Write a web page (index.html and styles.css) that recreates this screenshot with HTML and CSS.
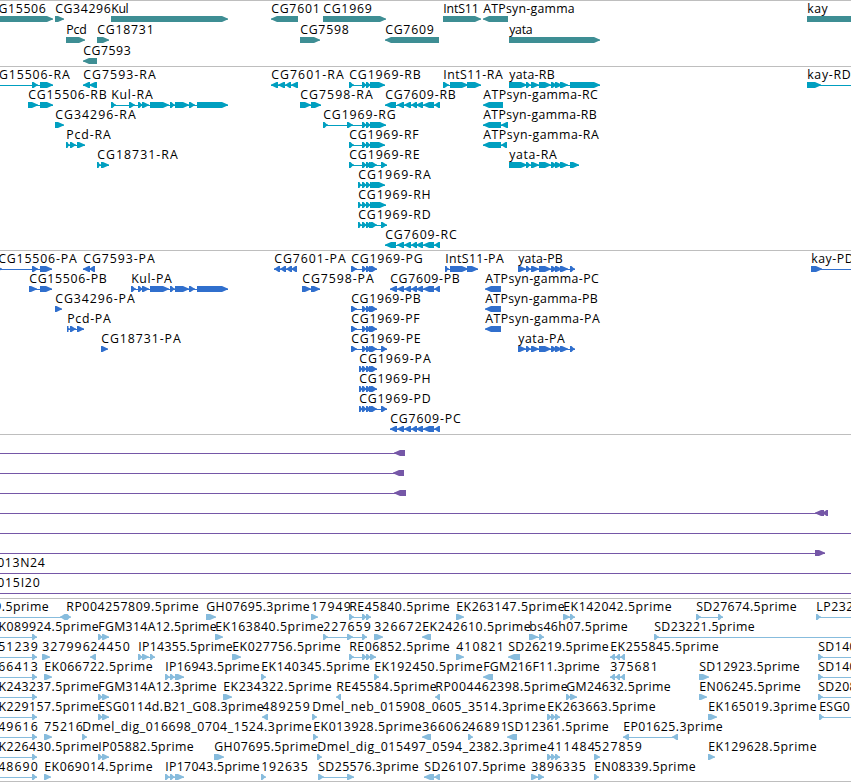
FILE: index.html
```html
<!DOCTYPE html>
<html lang="en">
<head>
<meta charset="utf-8">
<title>Genome tracks</title>
<link rel="stylesheet" href="styles.css">
</head>
<body>
<main class="browser">
<svg class="track genes" data-track="genes"></svg>
<svg class="track transcripts" data-track="transcripts"></svg>
<svg class="track proteins" data-track="proteins"></svg>
<svg class="track clones" data-track="clones"></svg>
<svg class="track ests" data-track="ests"></svg>
</main>
<script src="tracks.js"></script>
</body>
</html>
```
FILE: styles.css
```css
body {
  margin: 0;
  background: #fff;
}
.browser {
  display: flex;
  flex-direction: column;
  width: 851px;
  height: 781px;
  border-bottom: 1px solid #bebebe;
  overflow: hidden;
}
.track {
  display: block;
  flex: none;
  box-sizing: border-box;
  width: 100%;
  height: 184px;
  border-top: 1px solid #bebebe;
}
.track text {
  font: 12.3px "Open Sans", "Noto Sans", sans-serif;
  fill: #000;
}
.genes { height: 66px; color: #3e8e94; }
.transcripts { color: #009fc0; }
.proteins { color: #306fcd; }
.clones { height: 164px; color: #7557a7; }
.ests { height: 183px; color: #87bcdd; }
.glyph, .connector { fill: currentColor; }
.connector { shape-rendering: crispEdges; }
```
FILE: tracks.js
```js
// One feature per line: row | label | label start | label end | strand | segments
const tracks = {
genes: `
0|CG15506|-10|46|+|-20,53
0|CG34296|55|111|+|55,64
0|Kul|111|129|+|111,228
0|CG7601|271|320|-|271,298
0|CG1969|323|372|+|323,386
0|IntS11|443|479|+|443,481
0|ATPsyn-gamma|483|575|-|483,508
0|kay|807|828|+|807,900
1|Pcd|66|87|+|66,85
1|CG18731|97|154|+|97,109
1|CG7598|300|349|+|300,320
1|CG7609|385|434|-|385,439
1|yata|509|533|+|509,600
2|CG7593|83|131|-|83,97`,
transcripts: `
0|CG15506-RA|-10|70|+|-20,-10 32,38 40,53
0|CG7593-RA|83|156|-|83,90 89,97
0|CG7601-RA|271|344|-|271,278 278,285 285,291 291,298
0|CG1969-RB|349|421|+|349,354 362,367 366,371 370,375 371,385
0|IntS11-RA|443|503|+|443,449 450,468 467,481
0|yata-RB|509|555|+|509,527 526,531 531,539 539,551 551,557 555,562 560,568 570,600
0|kay-RD|807|851|+|807,821 890,900
1|CG15506-RB|28|107|+|28,38 40,53
1|Kul-RA|111|153|+|111,116 129,135 138,143 142,149 150,169 170,175 175,189 189,195 197,228
1|CG7598-RA|300|373|+|300,311 311,321
1|CG7609-RB|385|456|-|385,396 397,404 404,411 411,417 416,423 423,434 434,440
1|ATPsyn-gamma-RC|483|598|-|483,503
2|CG34296-RA|55|136|+|55,64
2|CG1969-RG|323|396|+|323,328 347,353 362,367 366,371 370,375 371,386
2|ATPsyn-gamma-RB|483|597|-|483,501 501,508
3|Pcd-RA|66|111|+|66,70 70,76 77,85
3|CG1969-RF|349|419|+|349,354 362,367 366,371 370,375 371,385
3|ATPsyn-gamma-RA|483|599|-|483,501 501,507
4|CG18731-RA|97|178|+|97,101 101,109
4|CG1969-RE|349|420|+|349,354 362,367 366,371 369,374 371,377 381,387
4|yata-RA|509|557|+|509,527 526,531 531,539 539,551 551,557 555,562 560,568 570,579
5|CG1969-RA|358|431|+|358,362 362,367 366,371 370,375 372,385
6|CG1969-RH|358|431|+|358,362 362,367 366,371 370,375 372,386
7|CG1969-RD|358|431|+|358,362 362,367 366,371 369,374 371,377 381,387
8|CG7609-RC|385|457|-|385,396 397,404 404,411 411,417 416,423 423,434 434,440`,
proteins: `
0|CG15506-PA|-2|77|+|-3,2 32,38 40,52
0|CG7593-PA|83|155|-|83,90 89,95
0|CG7601-PA|274|346|-|274,280 280,286 286,292 291,297
0|CG1969-PG|351|423|+|351,357 362,367 366,371 369,374 371,377
0|IntS11-PA|445|504|+|445,449 450,468 467,478
0|yata-PB|518|563|+|518,526 526,531 531,539 539,551 551,557 555,562 560,568 570,575
0|kay-PD|811|854|+|811,822 890,900
1|CG15506-PB|29|107|+|29,37 40,52
1|Kul-PA|131|172|+|131,136 138,143 142,149 150,169 170,175 175,189 189,195 197,228
1|CG7598-PA|302|374|+|302,311 311,320
1|CG7609-PB|390|460|-|390,397 397,404 404,411 411,417 416,423 423,434 434,440
1|ATPsyn-gamma-PC|485|599|-|485,501
2|CG34296-PA|55|135|+|55,62
2|CG1969-PB|351|421|+|351,357 362,367 366,371 369,374 371,377
2|ATPsyn-gamma-PB|485|598|-|485,501
3|Pcd-PA|67|111|+|67,70 70,76 77,84
3|CG1969-PF|351|420|+|351,357 362,367 366,371 369,374 371,377
3|ATPsyn-gamma-PA|485|600|-|485,501
4|CG18731-PA|101|181|+|101,108
4|CG1969-PE|351|421|+|351,357 362,367 366,371 369,374 371,377 381,387
4|yata-PA|518|565|+|518,526 526,531 531,539 539,551 551,557 555,562 560,568 570,575
5|CG1969-PA|359|431|+|359,363 362,367 366,371 369,374 371,377
6|CG1969-PH|359|431|+|359,363 362,367 366,371 369,374 371,377
7|CG1969-PD|359|431|+|359,363 362,367 366,371 369,374 371,377 381,387
8|CG7609-PC|390|461|-|390,397 397,404 404,411 411,417 416,423 423,434 434,440`,
clones: `
0||||-|-20,-10 394,405
1||||-|-20,-10 393,404
2||||-|-20,-10 394,406
3||||-|-20,-10 815,824 822,828
4||||+|-20,-10 890,900
5||||+|-20,-10 815,825
6|013N24|-3|45|+|-20,-10 890,900
7|015I20|-3|40|+|-20,-10 890,900`,
ests: `
0|9.5prime|-6|49|-|-20,-10 60,66
0|RP004257809.5prime|66|199|+|66,71
0|GH07695.3prime|206|310|+|206,216
0|17949|311|351|+|311,318
0|RE45840.5prime|349|450|+|349,354 362,367 366,371
0|EK263147.5prime|456|565|+|456,464
0|EK142042.5prime|563|672|+|563,570 570,575
0|SD27674.5prime|696|797|+|696,701 718,723
0|LP23210.5prime|816|917|+|816,821 890,900
1|EK089924.5prime|-9|99|+|-20,-10 32,37
1|FGM314A12.5prime|98|217|+|98,103 102,109
1|EK163840.5prime|215|324|+|215,223
1|227659|323|371|+|323,328 347,353 362,367
1|326672|374|422|+|374,383
1|EK242610.5prime|422|531|-|422,431
1|bs46h07.5prime|529|628|+|529,538 539,544
1|SD23221.5prime|654|755|+|654,659 890,900
2|51239|-2|38|+|-20,-10 32,37
2|327996|42|90|+|42,50
2|24450|90|130|-|90,96
2|IP14355.5prime|138|233|+|138,143 142,149 150,155
2|EK027756.5prime|232|341|+|232,241
2|RE06852.5prime|349|450|+|349,354 362,367 366,371 370,376
2|410821|456|504|+|456,464
2|SD26219.5prime|508|609|-|508,520
2|EK255845.5prime|610|719|-|610,615 615,620 620,625
2|SD14034.5prime|818|919|+|818,823 890,900
3|66413|-2|38|+|-20,-10 32,37
3|EK066722.5prime|44|153|+|44,52
3|IP16943.5prime|165|260|+|165,170 170,175 175,184
3|EK140345.5prime|261|370|+|261,266
3|EK192450.5prime|374|483|+|374,379
3|FGM216F11.3prime|483|600|-|483,493
3|375681|610|658|-|610,615 615,620 620,625
3|SD12923.5prime|699|800|+|699,709
3|SD14046.5prime|818|919|+|818,823 890,900
4|EK243237.5prime|-9|99|+|-20,-10 32,37
4|FGM314A12.3prime|98|217|+|98,103 102,109
4|EK234322.5prime|223|332|+|223,232
4|RE45584.5prime|336|437|-|336,341
4|RP004462398.5prime|435|568|-|435,440
4|GM24632.5prime|566|671|+|566,571 570,577
4|EN06245.5prime|699|801|+|699,707
4|SD20873.5prime|818|919|+|818,823 890,900
5|EK229157.5prime|-9|99|+|-20,-10 32,37
5|ESG0114d.B21_G08.3prime|98|264|+|98,103 102,109
5|489259|262|310|-|262,268
5|Dmel_neb_015908_0605_3514.3prime|312|546|+|312,317
5|EK263663.5prime|547|656|+|547,552 551,556 555,560
5|EK165019.3prime|708|817|+|708,717
5|ESG01149.5prime|819|926|+|819,824 890,900
6|49616|-2|38|+|-20,-10 32,37
6|75216|44|83|+|44,52
6|Dmel_dig_016698_0704_1524.3prime|82|312|+|82,87
6|EK013928.5prime|313|422|+|313,318
6|366062|422|469|-|422,431
6|46891|468|508|+|468,473
6|SD12361.5prime|507|609|-|507,517
6|EP01625.3prime|623|723|-|623,629 672,678
7|EK226430.5prime|-9|99|+|-20,-10 32,37
7|IP05882.5prime|98|194|+|98,103 102,109
7|GH07695.5prime|214|318|+|214,224
7|Dmel_dig_015497_0594_2382.3prime|317|547|+|317,322
7|411484|547|595|+|547,552 551,556 555,560
7|527859|594|642|+|594,600
7|EK129628.5prime|708|817|+|708,715
8|48690|-2|38|+|-20,-10 32,37
8|EK069014.5prime|44|153|+|44,51
8|IP17043.5prime|165|260|+|165,170 170,175 175,184
8|192635|261|308|+|261,266
8|SD25576.3prime|318|419|+|318,324 347,354
8|SD26107.5prime|424|526|-|424,434 434,440
8|3896335|531|586|+|531,538 538,544
8|EN08339.5prime|594|696|+|594,599`
};

const NS = 'http://www.w3.org/2000/svg';
function add(parent, name, attrs) {
  const el = document.createElementNS(NS, name);
  for (const key in attrs) el.setAttribute(key, attrs[key]);
  parent.appendChild(el);
  return el;
}

// Six pixel tall block that narrows to a blunt point on the strand's side.
function arrow(a, b, strand, y) {
  const head = Math.min(b - a - 1.5, 6);
  const forward = strand === '+';
  const base = forward ? a : b;
  const tip = forward ? b : a;
  const dir = forward ? 1 : -1;
  const neck = tip - dir * head;
  const mid = tip - dir * 1.5;
  return `M${base} ${y}H${neck}L${mid} ${y + 2}L${tip} ${y + 2.4}V${y + 3.8}` +
    `L${mid} ${y + 4}L${neck} ${y + 6}H${base}z`;
}

for (const svg of document.querySelectorAll('.track')) {
  const name = svg.dataset.track;
  const pitch = name === 'genes' ? 21 : 20;
  for (const line of tracks[name].trim().split('\n')) {
    const [row, label, start, end, strand, list] = line.split('|');
    const top = row * pitch + 15;
    const segments = list.split(' ').map(s => s.split(',').map(Number));
    const first = segments[0][0];
    const last = segments[segments.length - 1][1];
    if (segments.length > 1) {
      add(svg, 'rect', { class: 'connector', x: first, y: top + 3, width: last - first, height: 1 });
    }
    add(svg, 'path', { class: 'glyph', d: segments.map(([a, b]) => arrow(a, b, strand, top)).join('') });
    if (label) {
      add(svg, 'text', { x: +start + 0.2, y: top - 3, textLength: end - start - 0.5 }).textContent = label;
    }
  }
}
```
